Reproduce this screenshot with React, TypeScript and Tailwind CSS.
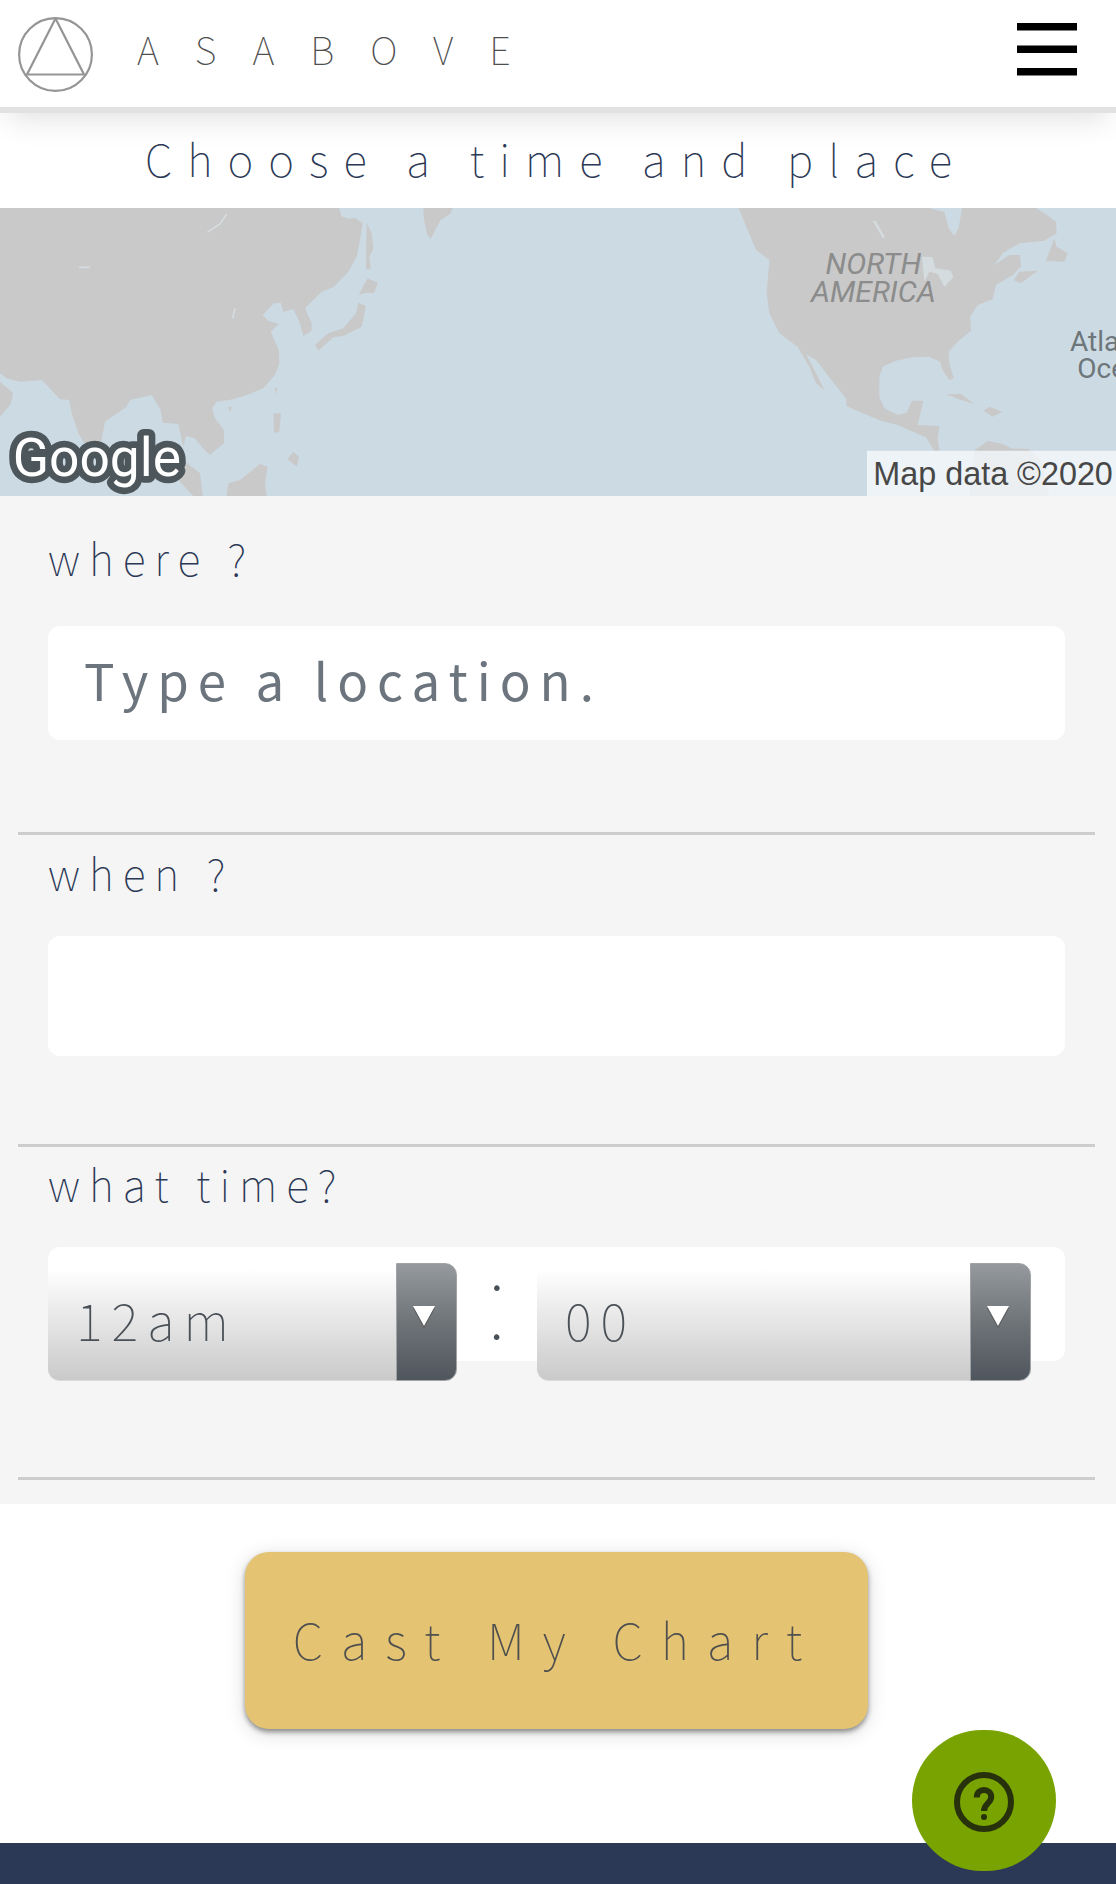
import { useState, type ReactNode } from 'react';

const HOURS = [
  '12am', '1am', '2am', '3am', '4am', '5am', '6am', '7am', '8am', '9am', '10am', '11am',
  '12pm', '1pm', '2pm', '3pm', '4pm', '5pm', '6pm', '7pm', '8pm', '9pm', '10pm', '11pm',
];
const MINUTES = Array.from({ length: 60 }, (_, i) => String(i).padStart(2, '0'));

function Header() {
  return (
    <header className="flex h-[113px] items-center justify-between border-b-6 border-[#e2e2e2] bg-white pr-[39px] pl-[18px] shadow-[0_14px_28px_-8px_rgba(0,0,0,0.12)]">
      <a href="#home" className="flex items-center gap-11 text-[#4f4f4f]">
        <svg viewBox="0 0 75 75" className="mt-0.5 size-[75px]" fill="none" stroke="#959595" strokeWidth="2.2" aria-hidden="true">
          <circle cx="37.5" cy="37.5" r="36.4" />
          <path d="M37.5 1.5 66 57.5H9z" />
        </svg>
        <span className="pb-2.5 text-[38px] leading-[56px] font-thin tracking-[36px]">ASABOVE</span>
      </a>
      <button type="button" aria-label="Open menu" className="pb-2">
        <svg viewBox="0 0 60 53" className="h-[53px] w-[60px]" aria-hidden="true">
          <path d="M0 0h60v7.5H0zM0 22.5h60V30H0zM0 45h60v7.5H0z" />
        </svg>
      </button>
    </header>
  );
}

function WorldMap() {
  return (
    <svg
      viewBox="0 24 3348 864"
      preserveAspectRatio="xMidYMid slice"
      className="block h-[288px] w-full bg-[#ccdae3]"
      role="img"
      aria-label="World map"
    >
      {/* Asia */}
      <g fill="#c9c9c9">
        <path d="M0 24H1018L1024 48 1045 56 1066 54 1088 70 1080 120 1070 170 1045 215 1000 262 965 275 940 300 915 325 935 370 935 392 910 408 900 370 880 328 850 335 843 308 822 310 788 345 805 362 836 372 812 395 836 450 838 490 825 525 790 565 740 585 700 598 650 605 636 625 645 655 672 690 672 730 630 765 605 740 585 715 558 708 550 740 535 672 488 668 482 630 455 585 390 600 380 620 315 665 300 745 262 745 235 700 215 640 208 600 180 598 135 550 125 540 60 545 20 535 0 520z" />
        <path d="M0 545 40 580 30 615 0 650zM1100 68 1115 100 1120 145 1108 170 1112 208 1098 208zM1103 235 1134 248 1122 280 1100 278 1076 284zM1075 308 1098 318 1085 380 1030 408 1000 412 955 452 945 435 985 400 1030 385 1068 340zM820 640 843 640 838 695 822 698zM880 755 897 770 890 800 862 778zM825 562 832 565 828 585zM684 620 697 622 688 635zM680 888 685 850 720 840 780 792 803 800 795 850 800 888zM550 780 600 820 608 888H580L530 835z" />
        <path d="M1270 24H1358L1350 42 1322 60 1292 117 1282 105 1272 60z" />
      </g>
      <g fill="none" stroke="#d5dce0" strokeWidth="5">
        <path d="M622 97 660 72 680 42M236 202H270M698 355 705 325" />
      </g>

      {/* North America */}
      <g transform="translate(2148 0)">
        <path
          fill="#c9c9c9"
          d="M68 24H640L660 30 685 36 698 85 715 108 728 85 738 24H960L985 40 1020 65 1022 100 985 122 910 130 860 160 835 195 880 165 912 165 915 200 890 225 840 255 830 298 785 315 762 350 765 392 725 425 698 455 700 490 713 535 700 540 680 510 672 485 640 470 590 472 540 482 500 500 490 530 490 590 505 625 545 645 572 638 588 602 622 602 605 675 670 678 665 715 670 752H655L630 712 590 695 545 675 495 662 430 635 392 618 390 595 350 545 300 480 270 462 300 520 325 570 300 550 280 500 245 440 190 400 160 340 152 280 160 180 120 150 95 90z"
        />
        <path
          fill="#c9c9c9"
          d="M1015 115 1022 140 1055 160 1045 185 990 182zM910 215 965 212 915 250 893 240zM690 582 735 582 775 612 735 600zM820 620 860 635 830 650 803 632zM775 752 815 722 860 732 885 745 940 748 975 785 1000 888H760z"
        />
        <path fill="#d5dce0" d="M618 170 650 172 658 205 705 212 712 232 685 260 665 222 640 215 625 245 622 215zM470 62 480 64 507 112 500 114z" />
        <g className="font-[Roboto] italic" fill="#8c8c8c" fontSize="90" textAnchor="middle">
          <text x="472" y="221">NORTH</text>
          <text x="472" y="306">AMERICA</text>
        </g>
        <g className="font-[Roboto]" fill="#6d767b" fontSize="84">
          <text x="1062" y="452">Atlantic</text>
          <text x="1084" y="534">Ocean</text>
        </g>
        <path fill="#f4f8fb" fillOpacity=".82" d="M453 752h747v136H453z" />
        <text x="472" y="856" className="font-['Liberation_Sans']" fill="#474747" fontSize="97">
          Map data ©2020
        </text>
      </g>

      <text
        x="38"
        y="828"
        className="font-[Roboto]"
        fill="#fff"
        stroke="#4d565b"
        strokeWidth="40"
        strokeLinejoin="round"
        paintOrder="stroke"
        fontSize="160"
      >
        Google
      </text>
    </svg>
  );
}

function FieldLabel({ htmlFor, children }: { htmlFor: string; children: ReactNode }) {
  return (
    <label htmlFor={htmlFor} className="block text-[43px] leading-[64px] font-thin tracking-[9px] text-[#2c3956]">
      {children}
    </label>
  );
}

interface TimeSelectProps {
  id: string;
  label: string;
  value: string;
  options: string[];
  onChange: (value: string) => void;
}

function TimeSelect({ id, label, value, options, onChange }: TimeSelectProps) {
  return (
    <div className="relative h-[118px]">
      <select
        id={id}
        aria-label={label}
        value={value}
        onChange={e => onChange(e.target.value)}
        className="h-full w-full appearance-none rounded-xl border-b border-[#dadada] bg-linear-to-b from-white from-5% to-[#cacaca] pr-16 pb-1 pl-7 text-[51px] font-thin tracking-[9px] text-[#495057]"
      >
        {options.map(o => (
          <option key={o}>{o}</option>
        ))}
      </select>
      <span className="pointer-events-none absolute inset-y-0 right-0 flex w-[61px] items-center justify-center rounded-r-xl border border-[#a0a3a6] bg-linear-to-b from-[#969a9f] via-[#6f7478] to-[#50565e] pr-1.5 pb-2.5">
        <svg viewBox="0 0 22 22" className="size-[22px]" aria-hidden="true">
          <path d="M0 2h22L11 22z" fill="#555" />
          <path d="M0 0h22L11 20z" fill="#fff" />
        </svg>
      </span>
    </div>
  );
}

export default function App() {
  const [place, setPlace] = useState('');
  const [date, setDate] = useState('');
  const [hour, setHour] = useState('12am');
  const [minute, setMinute] = useState('00');

  return (
    <div className="flex min-h-screen flex-col bg-white font-['Noto_Sans_CJK_JP',sans-serif]">
      <Header />
      <h1 className="pt-[13px] pr-1 pb-[18px] text-center text-[44px] leading-[64px] font-thin tracking-[15px] text-[#2c3956]">
        Choose a time and place
      </h1>
      <WorldMap />

      <form onSubmit={e => e.preventDefault()}>
        <div className="bg-[#f5f5f5] pr-[21px] pb-6 pl-[18px]">
          <div className="border-b-3 border-[#cdcdcd] px-[30px] pt-[29px] pb-[92px]">
            <FieldLabel htmlFor="where">where ?</FieldLabel>
            <input
              id="where"
              type="text"
              value={place}
              onChange={e => setPlace(e.target.value)}
              placeholder="Type a location."
              className="mt-[37px] block h-[114px] w-full rounded-xl bg-white px-9 pb-2 text-[51px] tracking-[9px] text-[#495057] placeholder-[#6c757d]"
            />
          </div>

          <div className="border-b-3 border-[#cdcdcd] px-[30px] pt-[5px] pb-[88px]">
            <FieldLabel htmlFor="when">when ?</FieldLabel>
            <input
              id="when"
              type="text"
              value={date}
              onChange={e => setDate(e.target.value)}
              className="mt-8 block h-[120px] w-full rounded-xl bg-white px-9 pb-2 text-[51px] tracking-[9px] text-[#495057]"
            />
          </div>

          <div className="border-b-3 border-[#cdcdcd] px-[30px] pt-1 pb-[116px]">
            <FieldLabel htmlFor="hour">what time?</FieldLabel>
            <div className="mt-8 grid h-[114px] grid-cols-[409fr_80px_494fr] rounded-xl bg-white pt-4 pr-[34px]">
              <TimeSelect id="hour" label="Hour" value={hour} options={HOURS} onChange={setHour} />
              <span className="text-center font-[Roboto] text-[104px] leading-[84px] font-thin text-[#495057]">:</span>
              <TimeSelect id="minute" label="Minute" value={minute} options={MINUTES} onChange={setMinute} />
            </div>
          </div>
        </div>

        <div className="flex justify-center pt-12 pr-[3px] pb-[114px]">
          <button
            type="submit"
            className="h-[177px] rounded-3xl bg-[#e4c473] px-12 pb-1 text-[49px] font-thin tracking-[18px] text-[#4f4f4f] shadow-[0_3px_5px_rgba(0,0,0,0.4),0_4px_20px_rgba(0,0,0,0.15)]"
          >
            Cast My Chart
          </button>
        </div>
      </form>

      <footer className="h-[41px] bg-[#2c3956]" />

      <button
        type="button"
        aria-label="Help"
        className="fixed right-[60px] bottom-[13px] flex h-[141px] w-36 items-center justify-center rounded-full bg-[#78a300] pt-0.5 text-[#27320c]"
      >
        <svg viewBox="0 0 20 20" className="size-[60px]" aria-hidden="true">
          <circle cx="10" cy="10" r="9" fill="none" stroke="currentColor" strokeWidth="2" />
          <path d="M7.6 8.5C7.6 6.9 8.6 6 10 6s2.4.9 2.4 2.3c0 2-2.4 2.3-2.4 4.7" fill="none" stroke="currentColor" strokeWidth="2" />
          <circle cx="10" cy="15" r="1" fill="currentColor" />
        </svg>
      </button>
    </div>
  );
}
